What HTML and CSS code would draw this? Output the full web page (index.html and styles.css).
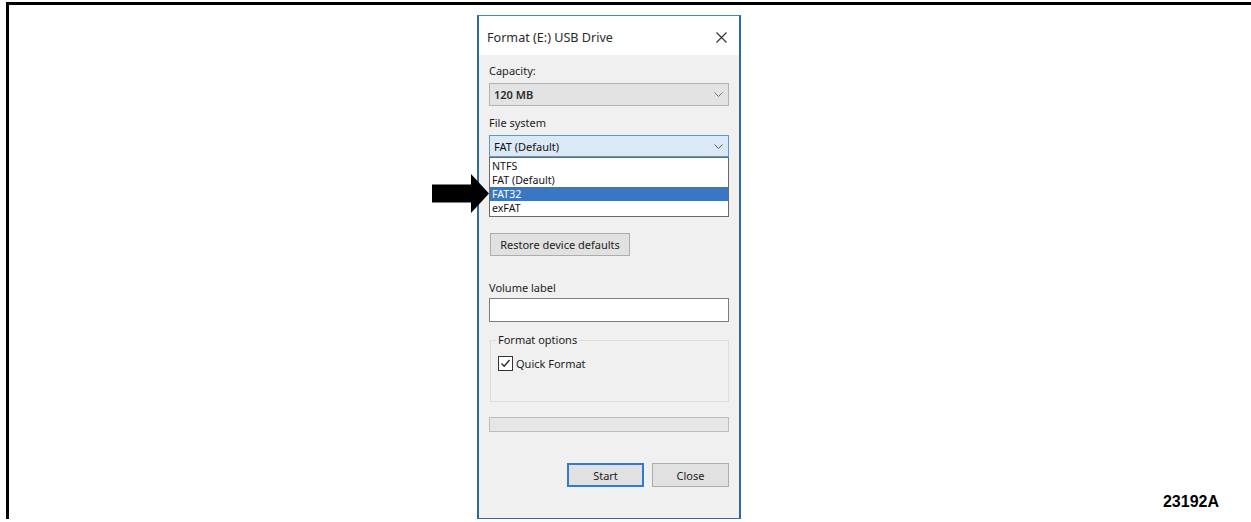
FILE: index.html
```html
<!DOCTYPE html>
<html lang="en">
<head>
<meta charset="utf-8">
<title>Format (E:) USB Drive</title>
<link rel="stylesheet" href="styles.css">
</head>
<body>
<div class="figure">
  <div class="dialog">
    <div class="titlebar">
      <span class="title">Format (E:) USB Drive</span>
      <svg class="close-icon" width="11" height="11" viewBox="0 0 11 11" aria-hidden="true">
        <path d="M0.5 0.5 L10.5 10.5 M10.5 0.5 L0.5 10.5" stroke="#2f2f2f" stroke-width="1.1" fill="none"/>
      </svg>
    </div>

    <div class="dialog-body">
      <div class="lbl">Capacity:</div>
      <div class="combo combo-plain combo-capacity">
        <span>120 MB</span>
        <svg class="chevron" width="9" height="5" viewBox="0 0 9 5"><polyline points="0.5,0.5 4.5,4.5 8.5,0.5" fill="none" stroke="#7a7a7a" stroke-width="1"/></svg>
      </div>

      <div class="lbl lbl-fs">File system</div>
      <div class="combo-wrap">
        <div class="combo combo-open">
          <span>FAT (Default)</span>
          <svg class="chevron" width="9" height="5" viewBox="0 0 9 5"><polyline points="0.5,0.5 4.5,4.5 8.5,0.5" fill="none" stroke="#5a5a5a" stroke-width="1"/></svg>
        </div>
        <ul class="droplist">
          <li>NTFS</li>
          <li>FAT (Default)</li>
          <li class="selected">FAT32</li>
          <li>exFAT</li>
        </ul>
      </div>

      <button class="btn btn-restore" type="button">Restore device defaults</button>

      <div class="lbl lbl-volume">Volume label</div>
      <div class="textbox"></div>

      <fieldset class="options">
        <legend>Format options</legend>
        <div class="check-row">
          <span class="checkbox">
            <svg width="13" height="13" viewBox="0 0 13 13"><polyline points="2.5,6.5 5.2,9.2 10.5,3" fill="none" stroke="#222" stroke-width="1.3"/></svg>
          </span>
          <span>Quick Format</span>
        </div>
      </fieldset>

      <div class="progress"></div>

      <div class="actions">
        <button class="btn btn-default" type="button">Start</button>
        <button class="btn" type="button">Close</button>
      </div>
    </div>
  </div>

  <svg class="pointer" width="57" height="39" viewBox="0 0 57 39" aria-hidden="true">
    <polygon points="0,10.5 39,10.5 39,0 57,19.5 39,39 39,28.5 0,28.5" fill="#000"/>
  </svg>

  <div class="fig-id">23192A</div>
</div>
</body>
</html>
```

FILE: styles.css
```css
html, body {
  margin: 0;
  padding: 0;
  background: #fff;
}

/* outer figure frame: rule on the top and left */
.figure {
  position: relative;
  display: flex;
  align-items: flex-start;
  margin: 2px 0 0 6px;
  height: 517px;
  border-top: 3px solid #000;
  border-left: 3px solid #000;
  box-sizing: border-box;
  font-family: "Noto Sans", "Open Sans", sans-serif;
}

.fig-id {
  align-self: flex-end;
  margin: 0 32px 9px auto;
  font-family: "Liberation Sans", Arial, sans-serif;
  font-weight: bold;
  font-size: 16px;
  line-height: 16px;
  color: #000;
}

.pointer {
  position: absolute;
  left: 423px;
  top: 169px;
}

/* the dialog window */
.dialog {
  margin: 10px 0 0 468px;
  width: 264px;
  box-sizing: border-box;
  border: 2px solid #2d6aa0;
  border-top: 1px solid #3a8ad2;
  background: #f0f0f0;
  color: #1c1c1c;
  font-size: 11px;
}

.titlebar {
  height: 39px;
  box-sizing: border-box;
  background: #fff;
  display: flex;
  align-items: center;
  padding: 3px 0 0 8px;
}

.title {
  font-size: 12.6px;
  color: #2a2a2a;
  flex: 1;
}

.close-icon {
  margin-right: 12px;
  margin-top: 1px;
}

.dialog-body {
  padding: 9px 10px 31px 10px;
}

.lbl {
  line-height: 14px;
  height: 14px;
  white-space: nowrap;
}

.lbl-fs { margin-top: 10px; }
.lbl-volume { margin-top: 25px; }

.combo {
  box-sizing: border-box;
  display: flex;
  align-items: center;
  justify-content: space-between;
  padding: 0 5px 0 4px;
  margin-top: 5px;
  color: #111;
}

.combo-plain {
  height: 23px;
  background: #e3e3e3;
  border: 1px solid #b2b2b2;
}

.combo-capacity span { font-weight: 600; color: #2a2a2a; }

/* the open list hangs below its combo, over the rows beneath */
.combo-wrap {
  position: relative;
}

.combo-open {
  height: 22px;
  background: #dbe9f6;
  border: 1px solid #5b98d2;
}

.droplist {
  position: absolute;
  left: 0;
  top: 100%;
  width: 240px;
  box-sizing: border-box;
  margin: 0;
  padding: 1px 0;
  list-style: none;
  background: #fff;
  border: 1px solid #6a6a6a;
  font-size: 10.6px;
  color: #111;
}

.droplist li {
  height: 14px;
  line-height: 14px;
  padding-left: 2px;
}

.droplist li.selected {
  background: #3a77c2;
  color: #fff;
}

.btn {
  display: block;
  box-sizing: border-box;
  height: 24px;
  background: #e1e1e1;
  border: 1px solid #adadad;
  font: inherit;
  color: #1c1c1c;
  padding: 0;
  margin: 0;
}

.btn-restore {
  margin: 76px 0 0 1px;
  width: 140px;
  height: 23px;
}

.textbox {
  margin-top: 3px;
  height: 24px;
  box-sizing: border-box;
  background: #fff;
  border: 1px solid #7d7d7d;
}

.options {
  margin: 11px 0 0 1px;
  padding: 0 7px 30px;
  border: 1px solid #dcdcdc;
  min-width: 0;
}

.options legend {
  padding: 0 2px;
  margin-left: -2px;
  line-height: 14px;
}

.check-row {
  margin-top: 9px;
  height: 15px;
  display: flex;
  align-items: center;
  gap: 3px;
}

.checkbox {
  width: 15px;
  height: 15px;
  box-sizing: border-box;
  border: 1px solid #333;
  background: #fff;
  display: flex;
  align-items: center;
  justify-content: center;
}

.progress {
  margin-top: 15px;
  height: 15px;
  box-sizing: border-box;
  background: #e6e6e6;
  border: 1px solid #bdbdbd;
}

.actions {
  margin-top: 31px;
  display: flex;
  justify-content: flex-end;
  gap: 8px;
}

.actions .btn {
  width: 77px;
}

.btn-default {
  border: 1px solid #2f7ad3;
  box-shadow: inset 0 0 0 1px #2f7ad3;
}
```
